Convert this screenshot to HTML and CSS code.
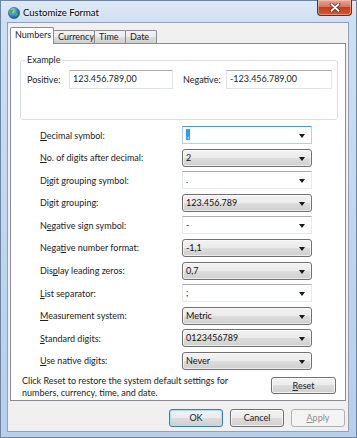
FILE: index.html
```html
<!DOCTYPE html>
<html lang="en">
<head>
  <meta charset="UTF-8" />
  <title>Customize Format</title>
  <link rel="stylesheet" href="styles.css">
</head>
<body>
  <div class="window">
    <div class="titlebar">
      <svg class="app-icon" width="12" height="12" viewBox="0 0 12 12">
        <defs>
          <radialGradient id="sea" cx="35%" cy="30%" r="75%">
            <stop offset="0" stop-color="#bfe4ff" />
            <stop offset="0.5" stop-color="#3b8fdc" />
            <stop offset="1" stop-color="#0f4f9e" />
          </radialGradient>
        </defs>
        <circle cx="6" cy="6" r="5.6" fill="url(#sea)" stroke="#21558f" stroke-width="0.6" />
        <path d="M2.2 3.6 C3.2 2.4 4.6 2.2 5.4 2.9 C5.9 3.5 5.1 4.4 4.3 4.6 C3.9 5.5 4.8 6.1 4.2 7.2 C3.6 7.9 2.6 7.3 2.1 6.2 C1.8 5.3 1.8 4.3 2.2 3.6 Z" fill="#4fae36" />
        <path d="M6.8 5.3 C7.8 4.9 9.4 5.3 9.9 6.4 C10.2 7.6 9.2 9 8 9.6 C7.3 9.9 6.9 9.1 7.2 8.3 C7.4 7.6 6.4 7.2 6.3 6.4 C6.2 5.9 6.4 5.5 6.8 5.3 Z" fill="#4fae36" />
      </svg>
      <span class="title">Customize Format</span>
      <button class="close-btn">
        <svg width="12" height="9" viewBox="0 0 12 9">
          <path d="M2.5 1.2 L9.5 7.8 M9.5 1.2 L2.5 7.8" stroke="#5a1f16" stroke-width="3.4" stroke-linecap="round" />
          <path d="M2.5 1.2 L9.5 7.8 M9.5 1.2 L2.5 7.8" stroke="#ffffff" stroke-width="1.9" stroke-linecap="round" />
        </svg>
      </button>
    </div>

    <div class="client">
      <div class="tabs">
        <div class="tab active tab-numbers">Numbers</div>
        <div class="tab tab-currency">Currency</div>
        <div class="tab tab-time">Time</div>
        <div class="tab tab-date">Date</div>
      </div>

      <div class="panel">
        <fieldset class="group">
          <legend>Example</legend>
          <div class="example-row">
            <span class="ex-label">Positive:</span>
            <div class="textbox pos">123.456.789,00</div>
            <span class="ex-label neg-label">Negative:</span>
            <div class="textbox neg">-123.456.789,00</div>
          </div>
        </fieldset>

        <div class="settings">
          <div class="row">
            <span class="label"><u>D</u>ecimal symbol:</span>
            <div class="combo edit focus"><span class="sel">,</span><i class="arrow"></i></div>
          </div>
          <div class="row">
            <span class="label"><u>N</u>o. of digits after decimal:</span>
            <div class="combo"><span>2</span><i class="arrow"></i></div>
          </div>
          <div class="row">
            <span class="label">D<u>i</u>git grouping symbol:</span>
            <div class="combo edit"><span>.</span><i class="arrow"></i></div>
          </div>
          <div class="row">
            <span class="label">Digit grouping:</span>
            <div class="combo"><span>123.456.789</span><i class="arrow"></i></div>
          </div>
          <div class="row">
            <span class="label">N<u>e</u>gative sign symbol:</span>
            <div class="combo edit"><span>-</span><i class="arrow"></i></div>
          </div>
          <div class="row">
            <span class="label">Nega<u>t</u>ive number format:</span>
            <div class="combo"><span>-1,1</span><i class="arrow"></i></div>
          </div>
          <div class="row">
            <span class="label">Dis<u>p</u>lay leading zeros:</span>
            <div class="combo"><span>0,7</span><i class="arrow"></i></div>
          </div>
          <div class="row">
            <span class="label"><u>L</u>ist separator:</span>
            <div class="combo edit"><span>;</span><i class="arrow"></i></div>
          </div>
          <div class="row">
            <span class="label"><u>M</u>easurement system:</span>
            <div class="combo"><span>Metric</span><i class="arrow"></i></div>
          </div>
          <div class="row">
            <span class="label"><u>S</u>tandard digits:</span>
            <div class="combo"><span>0123456789</span><i class="arrow"></i></div>
          </div>
          <div class="row">
            <span class="label"><u>U</u>se native digits:</span>
            <div class="combo"><span>Never</span><i class="arrow"></i></div>
          </div>
        </div>

        <div class="panel-foot">
          <p class="note">Click Reset to restore the system default settings for<br>numbers, currency, time, and date.</p>
          <button class="btn reset"><u>R</u>eset</button>
        </div>
      </div>

      <div class="dialog-buttons">
        <button class="btn default">OK</button>
        <button class="btn">Cancel</button>
        <button class="btn" disabled><u>A</u>pply</button>
      </div>
    </div>
  </div>
</body>
</html>
```

FILE: styles.css
```css
* {
  box-sizing: border-box;
}

body {
  margin: 0;
  font-family: Lato, "Noto Sans", sans-serif;
  font-size: 9px;
  color: #222;
  background: #fff;
}

.window {
  width: 357px;
  height: 438px;
  border: 1px solid #6d86a6;
  background: linear-gradient(180deg, #dde9f6 0, #cfdff2 21px, #c0d4ec 60%, #b8cee9 100%);
  display: flex;
  flex-direction: column;
}

/* title bar */
.titlebar {
  height: 21px;
  display: flex;
  align-items: center;
  flex-shrink: 0;
}

.app-icon {
  margin-left: 7px;
  margin-top: 2px;
}

.title {
  margin-left: 3px;
  margin-top: 1px;
  font-size: 9.5px;
  color: #000;
  text-shadow: 0 0 4px #fff, 0 0 2px #fff;
}

.close-btn {
  margin-left: auto;
  margin-right: 4px;
  align-self: flex-start;
  margin-top: -1px;
  width: 35px;
  height: 16px;
  padding: 0;
  border: 1px solid #6e2a1d;
  border-top: none;
  border-radius: 0 0 4px 4px;
  background: linear-gradient(180deg, #e7a99a 0, #d67560 45%, #c2401f 50%, #cf5a38 100%);
  box-shadow: inset 0 0 0 1px rgba(255, 210, 200, 0.45);
  display: flex;
  align-items: center;
  justify-content: center;
}

/* client area */
.client {
  margin: 0 7px 0 6px;
  height: 410px;
  border: 1px solid #8da2bd;
  background: #f0f0f0;
  padding: 4px 2px 3px 2px;
  display: flex;
  flex-direction: column;
}

.tabs {
  height: 16px;
  display: flex;
  align-items: flex-end;
  flex-shrink: 0;
}

.tab {
  position: relative;
  height: 13px;
  border: 1px solid #898c95;
  border-bottom: none;
  border-radius: 2px 2px 0 0;
  background: linear-gradient(180deg, #f2f2f2 0, #ebebeb 50%, #dddddd 50%, #cfcfcf 100%);
  line-height: 12px;
  padding-left: 4px;
  white-space: nowrap;
}

.tab + .tab {
  margin-left: -1px;
}

.tab.active {
  z-index: 2;
  height: 17px;
  margin-bottom: -1px;
  background: #fff;
  line-height: 14px;
}

.tab-numbers { width: 44px; }
.tab-currency { width: 42px; }
.tab-time { width: 32px; }
.tab-date { width: 32px; }

.panel {
  position: relative;
  z-index: 1;
  border: 1px solid #898c95;
  background: #fff;
  padding: 10px 0 1px 0;
}

/* example group */
.group {
  margin: 0 7px 0 9px;
  border: 1px solid #d5dfe5;
  border-radius: 3px;
  padding: 4px 4px 30px 4px;
}

.group legend {
  padding: 0 2px;
  line-height: 12px;
}

.example-row {
  display: flex;
  align-items: center;
  padding-left: 2px;
}

.ex-label {
  width: 42px;
}

.neg-label {
  margin-left: 10px;
  width: 43px;
}

.textbox {
  height: 19px;
  border: 1px solid #dfe3ea;
  border-top-color: #abadb3;
  background: #fff;
  padding-left: 3px;
  line-height: 15px;
}

.textbox.pos { width: 104px; }
.textbox.neg { width: 106px; }

/* settings rows */
.settings {
  margin-top: 6px;
  padding-left: 29px;
  display: flex;
  flex-direction: column;
  gap: 4.6px;
}

.row {
  display: flex;
  align-items: center;
  height: 18px;
}

.label {
  width: 142px;
}

.combo {
  position: relative;
  width: 130px;
  height: 18px;
  border: 1px solid #707070;
  border-radius: 3px;
  background: linear-gradient(180deg, #f2f2f2 0, #ebebeb 50%, #dddddd 50%, #cfcfcf 100%);
  box-shadow: inset 0 0 0 1px rgba(255, 255, 255, 0.6);
  padding-left: 3px;
  line-height: 16px;
  color: #111;
}

.combo.edit {
  border-radius: 0;
  border-color: #e3e9ef;
  border-top-color: #abadb3;
  background: #fff;
  box-shadow: none;
}

.combo.focus {
  border-color: #b5cfe7;
  border-top-color: #5794bf;
}

.combo .sel {
  background: #3399ff;
  color: #fff;
  padding: 0 1px;
}

.arrow {
  position: absolute;
  right: 6px;
  top: 7px;
  width: 0;
  height: 0;
  border-left: 3.5px solid transparent;
  border-right: 3.5px solid transparent;
  border-top: 4px solid #1a1a1a;
}

/* panel footer */
.panel-foot {
  margin-top: 5px;
  padding-left: 11px;
  display: flex;
  align-items: flex-start;
}

.note {
  margin: 0;
  line-height: 12px;
}

.btn {
  height: 18px;
  width: 54px;
  padding: 0;
  border: 1px solid #707070;
  border-radius: 3px;
  background: linear-gradient(180deg, #f2f2f2 0, #ebebeb 50%, #dddddd 50%, #cfcfcf 100%);
  box-shadow: inset 0 0 0 1px rgba(255, 255, 255, 0.7);
  font-family: Lato, "Noto Sans", sans-serif;
  font-size: 9px;
  color: #222;
}

.btn.reset {
  width: 65px;
  height: 17px;
  margin-left: auto;
  margin-right: 9px;
  margin-top: 2px;
}

.btn.default {
  border-color: #3c7fb1;
  box-shadow: inset 0 0 0 1px #a8e1f7;
}

.btn:disabled {
  border-color: #adb2b5;
  background: #f4f4f4;
  box-shadow: none;
  color: #8d8d8d;
}

.dialog-buttons {
  margin-top: 8px;
  margin-right: 1px;
  display: flex;
  justify-content: flex-end;
  gap: 7px;
}
```
